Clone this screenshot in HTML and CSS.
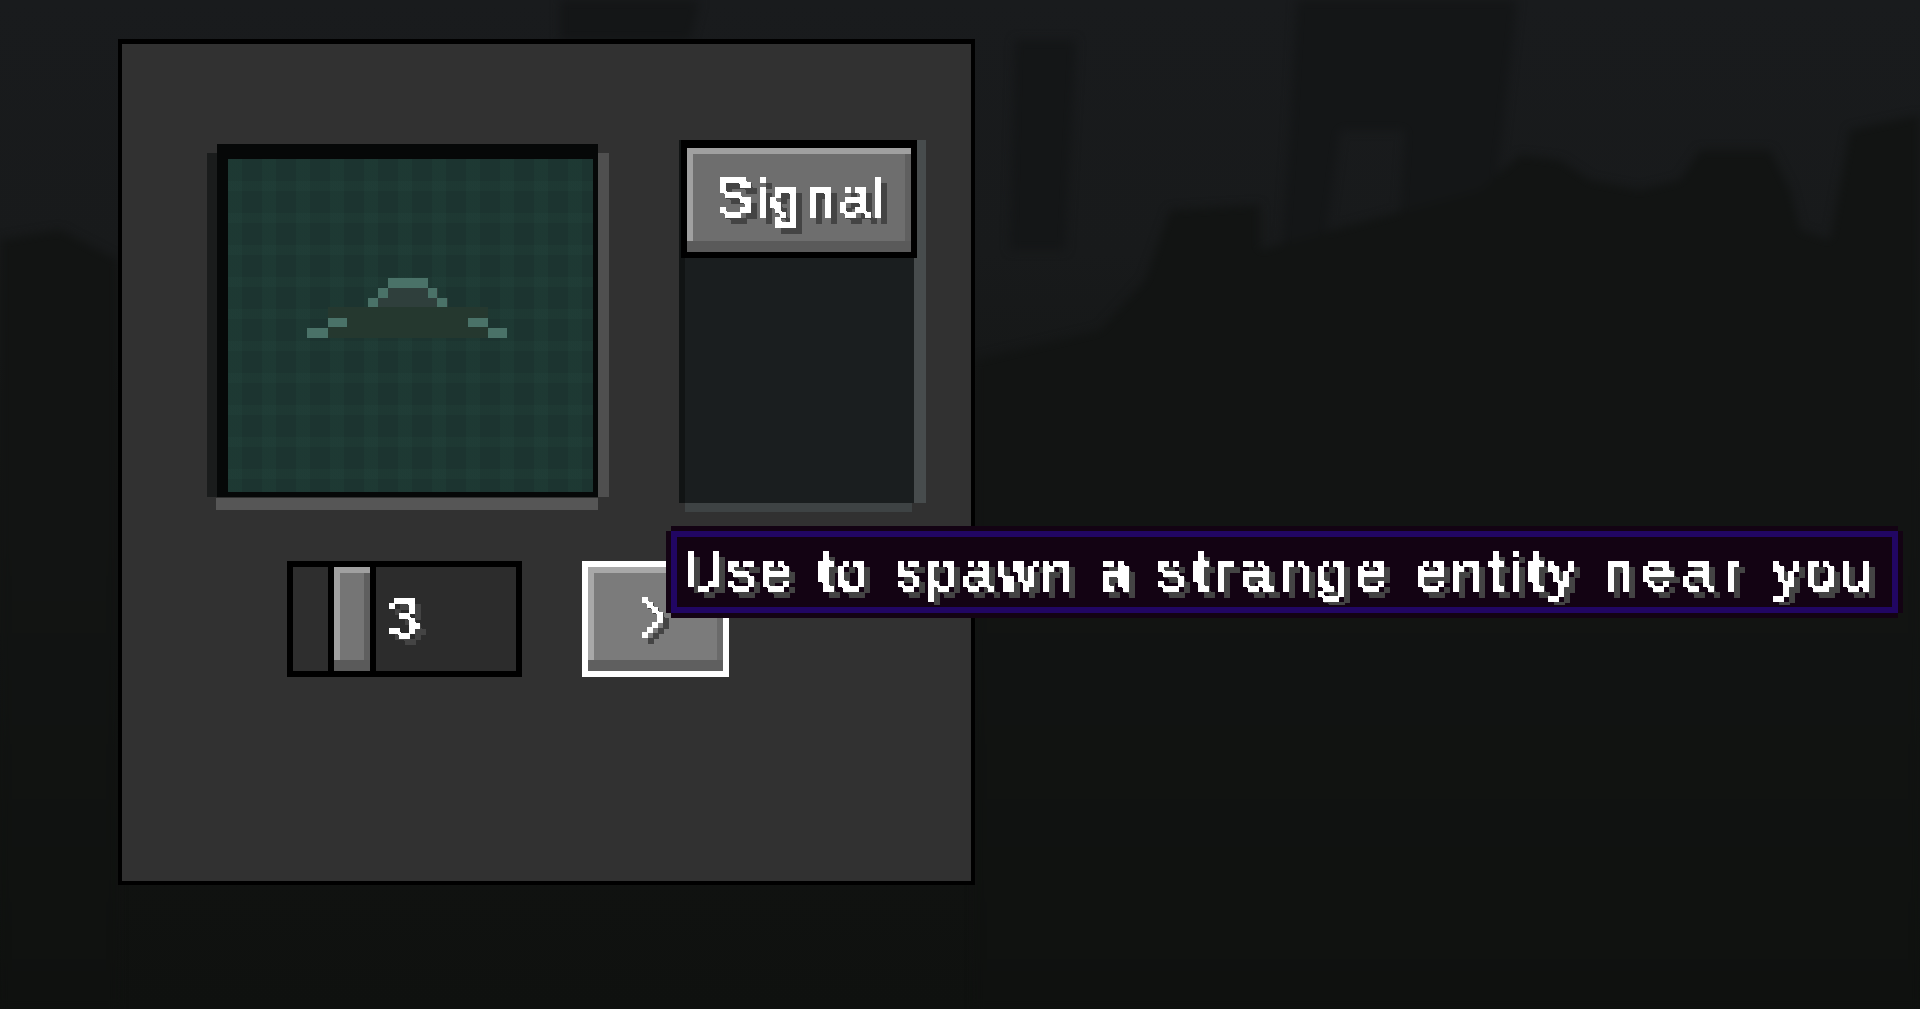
FILE: index.html
```html
<!DOCTYPE html>
<html lang="en">
<head>
<meta charset="utf-8">
<title>Signal</title>
<link rel="stylesheet" href="styles.css">
</head>
<body>
<svg class="filters" aria-hidden="true" width="0" height="0">
  <defs>
    <linearGradient id="tree-fade" x1="0" y1="0" x2="0" y2="1">
      <stop offset="0" stop-color="#121413"/>
      <stop offset=".45" stop-color="#121413"/>
      <stop offset="1" stop-color="#0f110f"/>
    </linearGradient>
  </defs>
  <filter id="mc" x="0" y="0" width="100%" height="100%" color-interpolation-filters="sRGB">
    <feComponentTransfer in="SourceAlpha" result="solid"><feFuncA type="discrete" tableValues="0 1"/></feComponentTransfer>
    <feFlood x="3" y="3" width="1" height="1"/>
    <feComposite width="5.8" height="5.8"/>
    <feTile result="grid"/>
    <feComposite in="solid" in2="grid" operator="in"/>
    <feMorphology operator="dilate" radius="3" result="wide"/>
    <feOffset in="wide" dx="1" dy="1" result="shift"/>
    <feComposite in="wide" in2="shift" operator="in" result="px"/>
    <feFlood flood-color="#ffffff"/>
    <feComposite in2="px" operator="in" result="face"/>
    <feOffset in="px" dx="6" dy="6" result="off"/>
    <feFlood flood-color="#444444"/>
    <feComposite in2="off" operator="in" result="shade"/>
    <feMerge><feMergeNode in="shade"/><feMergeNode in="face"/></feMerge>
  </filter>
</svg>
<svg class="backdrop" aria-hidden="true" viewBox="0 0 1920 1009" preserveAspectRatio="none">
  <g class="far">
    <path d="M560 0H700L690 40H560Z"/>
    <path d="M1297 0H1517L1500 150L1490 250L1440 270L1415 370L1390 370L1405 130L1340 130L1320 280L1280 280L1290 130Z"/>
    <path d="M1015 40H1076L1065 250H1010Z"/>
  </g>
  <path class="trees" d="M0 240L60 230L118 260V1009H0ZM975 360L1100 330L1145 280L1170 210L1260 205L1260 250L1480 190L1520 155L1560 160L1590 180L1640 190L1680 180L1700 150L1770 150L1790 190L1800 230L1830 240L1850 130L1920 115V1009H975Z"/>
</svg>
<main class="panel">
  <div class="top-row">
    <div class="scope-col">
      <div class="scope-frame">
        <div class="scope">
          <svg class="wave" viewBox="0 0 365 333" aria-hidden="true">
            <path class="wave-low" d="M100 148H260V179H100Z"/>
            <path class="wave-mid" d="M150 129H210V139H220V148H140V139H150Z"/>
            <path class="wave-line" d="M160 119H200V129H160Z M150 129H160V139H150Z M200 129H209V139H200Z M140 139H150V148H140Z M209 139H219V148H209Z M100 159H119V168H100Z M79 169H100V179H79Z M240 159H260V168H240Z M260 169H279V179H260Z"/>
          </svg>
        </div>
      </div>
      <div class="lip lip-scope"></div>
    </div>
    <div class="list-col">
      <div class="list-frame">
        <div class="list-item">
          <button class="face signal-btn" type="button"><span class="mc mc-signal">Signal</span></button>
        </div>
      </div>
      <div class="lip lip-list"></div>
    </div>
  </div>
  <div class="bottom-row">
    <div class="slider">
      <span class="track-start"></span>
      <span class="face thumb"></span>
      <span class="track"><span class="mc mc-value">3</span></span>
    </div>
    <button class="face next" type="button"><span class="mc mc-next"><span class="chevron">&gt;</span></span></button>
  </div>
</main>
<div class="tooltip"><div class="tooltip-line"><span class="mc mc-tip">Use to spawn a <span class="ls-strange">strange</span> <span class="ls-entity">entity</span> <span class="ls-near">near</span> you</span></div></div>
</body>
</html>
```
FILE: styles.css
```css
* { box-sizing: border-box; }
html, body { margin: 0; height: 100%; }
body {
  position: relative;
  width: 1920px;
  height: 1009px;
  overflow: hidden;
  padding: 39px 0 0 118px;
  background: linear-gradient(180deg, #191b1d 0%, #181a1b 25%, #131514 50%, #0f110f 100%);
  font-family: "Liberation Sans", sans-serif;
}
.filters { position: absolute; }
.backdrop { position: absolute; inset: 0; width: 1920px; height: 1009px; filter: blur(5px); }
.far { fill: #141617; }
.trees { fill: url(#tree-fade); }
.panel {
  position: relative;
  width: 857px;
  height: 846px;
  background: #313131;
  border: solid #000;
  border-width: 5px 4px 4px 4px;
}
.top-row { display: flex; align-items: flex-start; padding-left: 85px; gap: 70px; }
.scope-col { margin-top: 109px; }
.scope-frame {
  display: flex;
  border: solid;
  border-width: 0 11px 0 10px;
  border-color: transparent #4f4f4f transparent #1a1c1c;
}
.scope {
  margin-top: -9px;
  width: 381px;
  height: 353px;
  border: solid #060808;
  border-width: 15px 5px 5px 11px;
  background-color: #1c3430;
  background-image:
    linear-gradient(90deg, rgba(40,84,72,.14) 0 14px, transparent 14px),
    linear-gradient(0deg, rgba(40,84,72,.12) 0 10px, transparent 10px);
  background-size: 34px 32px;
  background-origin: padding-box;
}
.wave { display: block; width: 365px; height: 333px; }
.wave-low { fill: #25382f; }
.wave-mid { fill: #2f3f3c; }
.wave-line { fill: #4a7268; }
.lip { height: 12px; margin-top: 1px; }
.lip-scope { margin-left: 9px; margin-right: 11px; background: #565656; }
.list-col { margin-top: 96px; width: 247px; }
.list-frame {
  height: 363px;
  background: #1a1e1f;
  border: solid;
  border-width: 0 12px 0 6px;
  border-color: transparent #474c4d transparent #111414;
}
.lip-list { height: 9px; margin: 0 14px 0 6px; background: #3e4344; }
.list-item {
  margin: 0 -3px 0 -4px;
  height: 118px;
  background: #000;
  padding: 8px 6px 6px 6px;
}
.face {
  display: block;
  margin: 0;
  padding: 0;
  border: 0;
  background: #6e6e6e;
  box-shadow: inset 0 -11px #5a5a5a, inset 6px 6px #a0a0a0, inset -6px 0 #5f5f5f;
}
.signal-btn { position: relative; width: 224px; height: 104px; }
.bottom-row { display: flex; align-items: flex-start; padding-left: 165px; margin-top: 49px; gap: 60px; }
.slider {
  display: flex;
  width: 235px;
  height: 116px;
  gap: 6px;
  background: #000;
  padding: 6px;
}
.track-start { width: 35px; background: #2e2e2e; }
.thumb { width: 36px; background: #757575; }
.track { flex: 1; position: relative; background: #2c2c2c; }
.next {
  position: relative;
  width: 147px;
  height: 116px;
  background: #7b7b7b;
  border: 6px solid #fff;
  box-shadow: inset 0 -11px #5f5f5f, inset 6px 6px #a8a8a8, inset -6px 0 #6a6a6a;
}
.mc {
  display: block;
  color: #fff;
  font-family: "Liberation Sans", sans-serif;
  font-size: 56px;
  line-height: 70px;
  white-space: nowrap;
  filter: url(#mc) blur(.35px);
  text-align: left;
}
.mc-signal { position: absolute; left: 27px; top: 13px; width: 190px; height: 76px; letter-spacing: 3px; }
.mc-value { position: absolute; left: 12px; top: 15px; width: 60px; height: 76px; }
.mc-next { position: absolute; left: 53px; top: 14px; width: 60px; height: 76px; }
.chevron { display: inline-block; transform: scale(.72, 1.45); transform-origin: 0 50%; }
.tooltip {
  position: absolute;
  left: 666px;
  top: 526px;
  width: 1237px;
  height: 92px;
  padding: 5px;
  background: #130313;
  clip-path: polygon(5px 0, calc(100% - 5px) 0, calc(100% - 5px) 5px, 100% 5px, 100% calc(100% - 5px), calc(100% - 5px) calc(100% - 5px), calc(100% - 5px) 100%, 5px 100%, 5px calc(100% - 5px), 0 calc(100% - 5px), 0 5px, 5px 5px);
}
.tooltip-line { height: 82px; border: 6px solid #210663; padding: 0 0 0 5px; }
.mc-tip { width: 1216px; height: 70px; margin-top: -2px; letter-spacing: 4.3px; word-spacing: 2px; }
.ls-strange { letter-spacing: 7.2px; }
.ls-entity { letter-spacing: 5.2px; }
.ls-near { letter-spacing: 9px; }
```
